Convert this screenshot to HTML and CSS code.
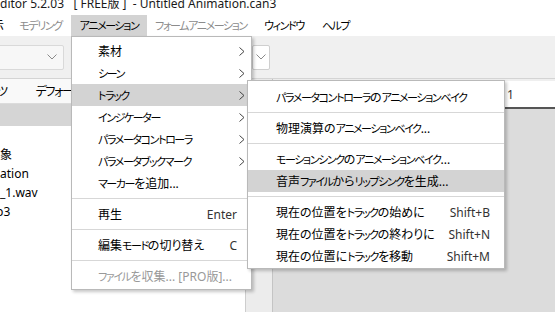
FILE: index.html
```html
<!DOCTYPE html>
<html lang="ja">
<head>
    <meta charset="UTF-8">
    <title>Untitled Animation.can3</title>
    <link rel="stylesheet" href="styles.css">
</head>
<body>
    <div class="window">
        <div class="titlebar">ditor 5.2.03   [ FREE版 ]  - Untitled Animation.can3</div>

        <div class="menubar">
            <span class="mb-item">表示</span>
            <span class="mb-item off"><span class="k">モデリング</span></span>
            <span class="mb-item open"><span class="k">アニメーション</span></span>
            <span class="mb-item off"><span class="k">フォームアニメーション</span></span>
            <span class="mb-item"><span class="k">ウィンドウ</span></span>
            <span class="mb-item"><span class="k">ヘルプ</span></span>
        </div>

        <div class="toolbar">
            <div class="combo combo-wide">
                <svg width="10" height="6" viewBox="0 0 10 6"><polyline points="0.5,0.5 5,5 9.5,0.5" /></svg>
            </div>
            <div class="combo combo-small">
                <svg width="10" height="6" viewBox="0 0 10 6"><polyline points="0.5,0.5 5,5 9.5,0.5" /></svg>
            </div>
        </div>

        <div class="workspace">
            <div class="project">
                <div class="tabs">
                    <span class="tab k">ツ</span>
                    <span class="tab k">デフォー</span>
                </div>
                <div class="project-head"></div>
                <ul class="tree">
                    <li>象</li>
                    <li>ation</li>
                    <li>_1.wav</li>
                    <li class="cut">p3</li>
                </ul>
            </div>
            <div class="gutter"></div>
            <div class="timeline">
                <div class="ruler"><span class="frame">1</span></div>
                <div class="tracks"></div>
            </div>
        </div>

        <!-- アニメーション menu -->
        <div class="menu menu-main">
            <div class="item"><span class="label">素材</span><svg class="arrow" width="6" height="9" viewBox="0 0 6 9"><polyline points="0.5,0.5 5,4.5 0.5,8.5" /></svg></div>
            <div class="item"><span class="label"><span class="k">シーン</span></span><svg class="arrow" width="6" height="9" viewBox="0 0 6 9"><polyline points="0.5,0.5 5,4.5 0.5,8.5" /></svg></div>
            <div class="item active"><span class="label"><span class="k">トラック</span></span><svg class="arrow" width="6" height="9" viewBox="0 0 6 9"><polyline points="0.5,0.5 5,4.5 0.5,8.5" /></svg></div>
            <div class="item"><span class="label"><span class="k">インジケーター</span></span><svg class="arrow" width="6" height="9" viewBox="0 0 6 9"><polyline points="0.5,0.5 5,4.5 0.5,8.5" /></svg></div>
            <div class="item"><span class="label"><span class="k">パラメータコントローラ</span></span><svg class="arrow" width="6" height="9" viewBox="0 0 6 9"><polyline points="0.5,0.5 5,4.5 0.5,8.5" /></svg></div>
            <div class="item"><span class="label"><span class="k">パラメータブックマーク</span></span><svg class="arrow" width="6" height="9" viewBox="0 0 6 9"><polyline points="0.5,0.5 5,4.5 0.5,8.5" /></svg></div>
            <div class="item"><span class="label"><span class="k">マーカー</span>を追加...</span></div>
            <div class="sep"></div>
            <div class="item"><span class="label">再生</span><span class="key">Enter</span></div>
            <div class="sep"></div>
            <div class="item"><span class="label">編集<span class="k">モード</span>の切り替え</span><span class="key">C</span></div>
            <div class="sep"></div>
            <div class="item disabled"><span class="label"><span class="k">ファイル</span>を収集... [PRO版]...</span></div>
        </div>

        <!-- トラック submenu -->
        <div class="menu menu-sub">
            <div class="item"><span class="label"><span class="k">パラメータコントローラ</span>の<span class="k">アニメーションベイク</span></span></div>
            <div class="sep"></div>
            <div class="item"><span class="label">物理演算の<span class="k">アニメーションベイク</span>...</span></div>
            <div class="sep"></div>
            <div class="item"><span class="label"><span class="k">モーションシンク</span>の<span class="k">アニメーションベイク</span>...</span></div>
            <div class="item active"><span class="label">音声<span class="k">ファイル</span>から<span class="k">リップシンク</span>を生成...</span></div>
            <div class="sep"></div>
            <div class="item"><span class="label">現在の位置を<span class="k">トラック</span>の始めに</span><span class="key">Shift+B</span></div>
            <div class="item"><span class="label">現在の位置を<span class="k">トラック</span>の終わりに</span><span class="key">Shift+N</span></div>
            <div class="item"><span class="label">現在の位置に<span class="k">トラック</span>を移動</span><span class="key">Shift+M</span></div>
        </div>
    </div>
</body>
</html>
```

FILE: styles.css
```css
body {
    margin: 0;
    font-family: "Noto Sans", "Noto Sans CJK JP", sans-serif;
    font-size: 12px;
    font-feature-settings: "palt";
    color: #000;
    background-color: #fff;
}
.window {
    position: relative;
    width: 555px;
    height: 312px;
    overflow: hidden;
}
/* katakana runs are set narrow, like the UI font of the original */
.k {
    font-size: 11px;
    letter-spacing: -1.4px;
}
.titlebar {
    height: 15px;
    line-height: 8px;
    white-space: pre;
    color: #1a1a1a;
}
.menubar {
    display: grid;
    grid-template-columns: 36px 61px 76px 108px 58px 45px;
    margin-left: -26px;
    height: 21px;
    line-height: 21px;
}
.mb-item {
    text-align: center;
    white-space: nowrap;
}
.mb-item.off {
    color: #8c8c8c;
}
.mb-item.open {
    background-color: #d3d3d3;
}
.toolbar {
    display: flex;
    align-items: center;
    height: 42px;
    background-color: #f0f0f0;
    border-bottom: 1px solid #d4d4d4;
}
.combo {
    display: flex;
    align-items: center;
    justify-content: flex-end;
    height: 25px;
    box-sizing: border-box;
    border: 1px solid #d9d9d9;
    border-radius: 2px;
    background-color: #f7f7f7;
}
.combo svg polyline {
    fill: none;
    stroke: #8a8a8a;
    stroke-width: 1;
}
.combo-wide {
    width: 74px;
    margin-left: -10px;
    padding-right: 6px;
}
.combo-small {
    width: 18px;
    margin-left: 188px;
    padding-right: 3px;
    background-color: #fff;
    border-color: #cfcfcf;
}
.workspace {
    display: grid;
    grid-template-columns: 245px 28px 1fr;
    height: 233px;
}
.project {
    background-color: #fff;
}
.tabs {
    display: flex;
    gap: 29px;
    height: 24px;
    line-height: 26px;
    background-color: #f9f9f9;
    border-bottom: 1px solid #dcdcdc;
    margin-left: -3px;
}
.tabs .tab {
    font-size: 12px;
}
.project-head {
    height: 22px;
    background-color: #d5d5d5;
}
.tree {
    list-style: none;
    margin: 0;
    padding: 19px 0 0;
    line-height: 19px;
}
.tree .cut {
    margin-left: -4px;
}
.gutter {
    background-color: #ececec;
    border-left: 1px solid #cdcdcd;
    border-right: 1px solid #c4c4c4;
}
.timeline {
    display: flex;
    flex-direction: column;
}
.ruler {
    height: 26px;
    line-height: 28px;
    padding-left: 234px;
    background-color: #fff;
    border-top: 2px solid #efefef;
    border-bottom: 2px solid #555;
    color: #333;
}
.tracks {
    flex: 1;
    background-color: #dcdcdc;
}
.menu {
    position: absolute;
    box-sizing: border-box;
    background-color: #fff;
    border: 1px solid #b9b9b9;
    box-shadow: 2px 2px 3px rgba(0, 0, 0, 0.22);
}
.menu-main {
    left: 71px;
    top: 36px;
    width: 181px;
    padding: 3px 0 2px;
}
.menu-sub {
    left: 247px;
    top: 80px;
    width: 258px;
    padding: 5px 0 1px;
}
.item {
    display: flex;
    align-items: center;
    height: 22px;
    white-space: nowrap;
}
.menu-main .item {
    padding: 0 6px 0 26px;
}
.menu-sub .item {
    padding: 0 14px 0 28px;
}
.menu-main .key {
    margin-right: 8px;
}
.item.active {
    background-color: #d3d3d3;
}
.item.disabled {
    color: #999;
}
.label {
    flex: 1;
}
.key {
    color: #333;
}
.arrow polyline {
    fill: none;
    stroke: #444;
    stroke-width: 1;
}
.sep {
    height: 1px;
    margin: 4px 0;
    background-color: #d7d7d7;
}
```
